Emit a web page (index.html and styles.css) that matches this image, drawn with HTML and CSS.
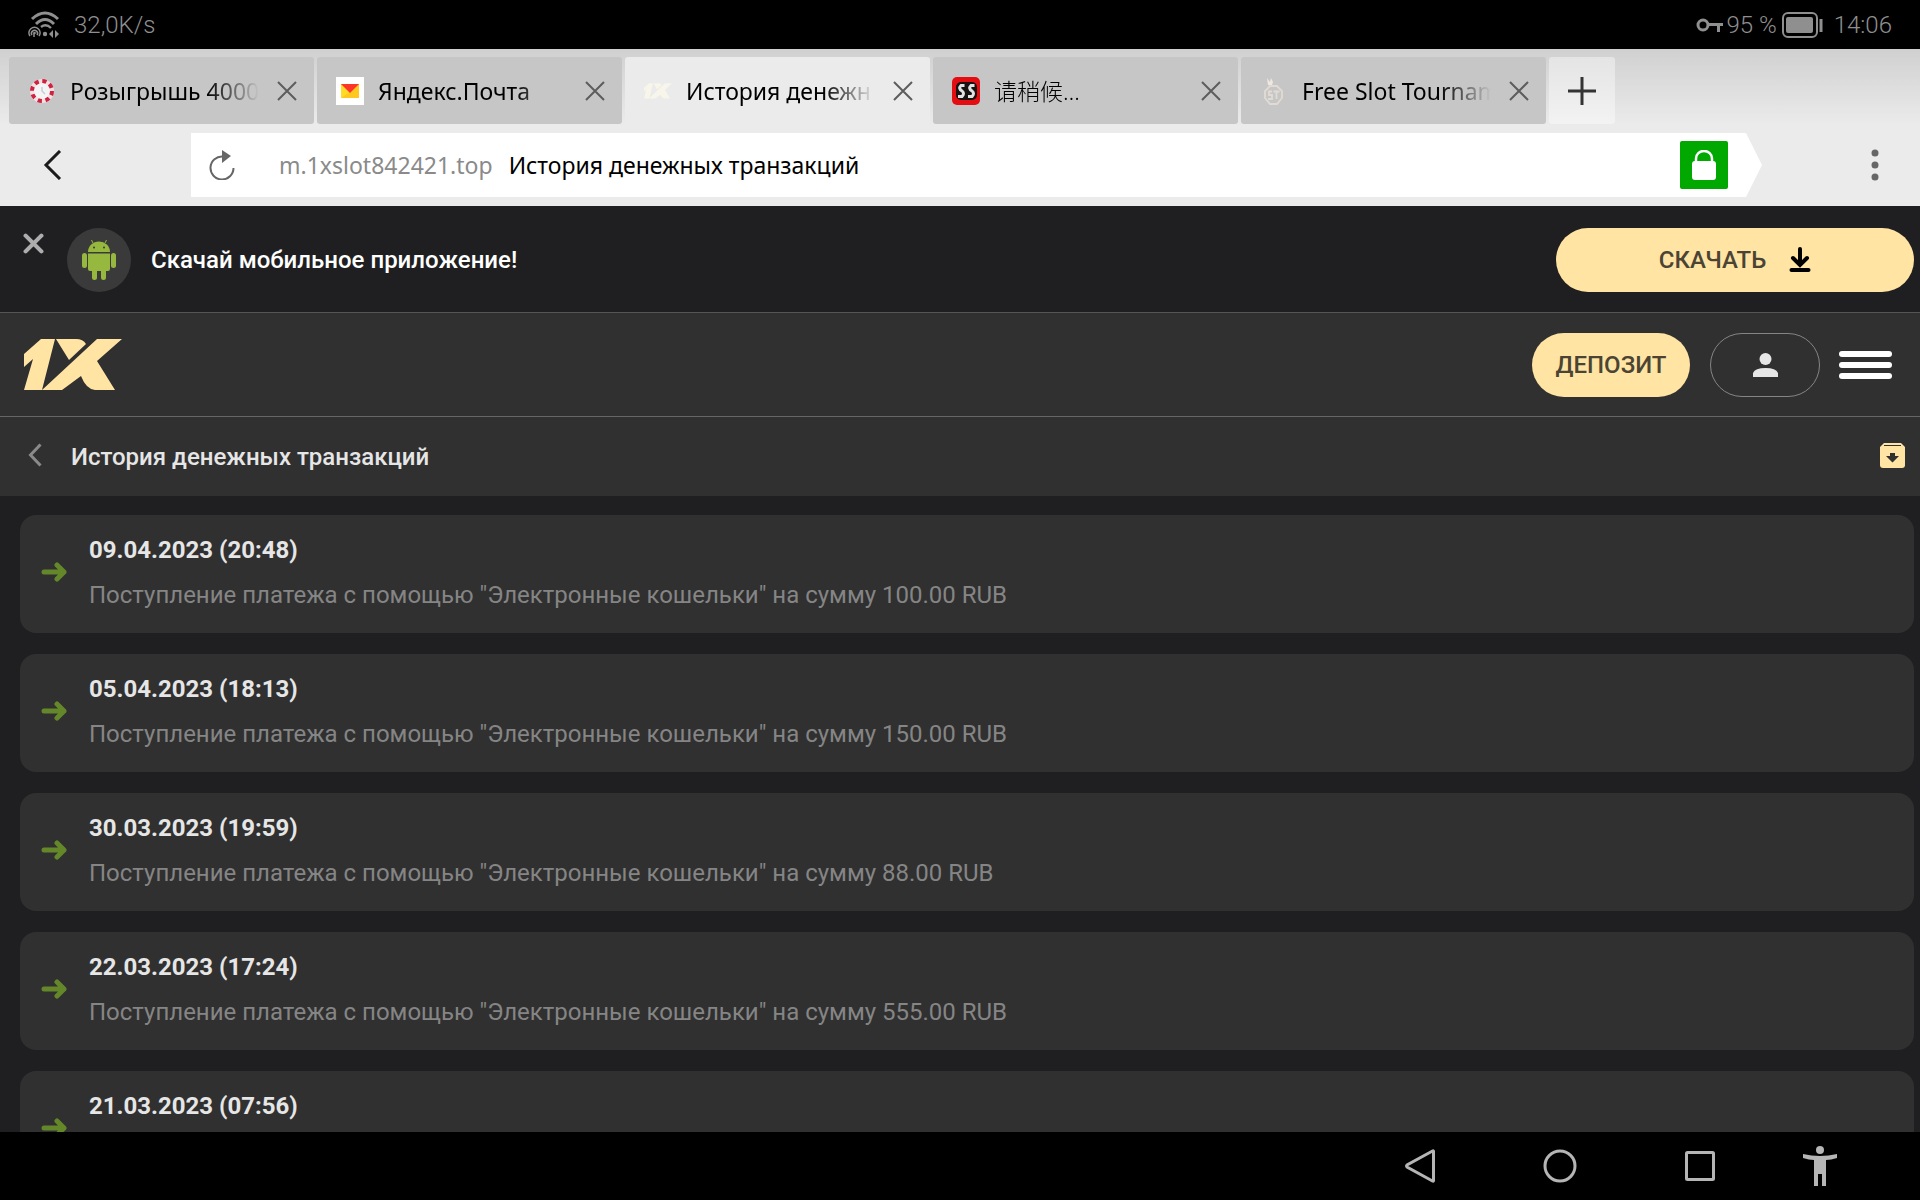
FILE: index.html
```html
<!DOCTYPE html>
<html lang="ru">
<head>
<meta charset="utf-8">
<title>История денежных транзакций</title>
<link rel="stylesheet" href="styles.css">
</head>
<body>
<div class="device">
  <div class="status-bar">
    <div class="status-group status-left">
      <svg class="icon-wifi" viewBox="0 0 32 28" fill="none" stroke="#8f8f8f" stroke-width="3" aria-hidden="true">
        <path d="M4 8Q17-4 30 8M8 13Q17 4 26 13" /><path d="M13 16Q18 12 23 17" stroke-width="2.4"/>
        <g stroke-width="1.6"><path d="M2 25a5.5 5.5 0 1 1 9 0M4 24a3 3 0 1 1 5 0"/></g>
        <circle cx="6.500" cy="22" r="1.300" fill="#8f8f8f" stroke="none"/><path d="M6 22v4" stroke-width="1.500"/>
        <circle cx="17" cy="23" r="2.200" fill="#8f8f8f" stroke="none"/>
        <path d="M21 23l4-4v8zM27 19v8l4-4z" fill="#8f8f8f" stroke="none"/>
      </svg>
      <span>32,0K/s</span>
    </div>
    <div class="status-group">
      <svg class="icon-key" viewBox="0 0 28 18" fill="none" stroke="#8f8f8f" stroke-width="3" aria-hidden="true"><circle cx="7" cy="9" r="5"/><path d="M12 8.500h15M22.500 9v7"/></svg>
      <span>95 %</span>
      <svg class="icon-battery" viewBox="0 0 42 28" aria-hidden="true"><rect x="1" y="2" width="34" height="24" rx="5" fill="none" stroke="#8f8f8f" stroke-width="2"/><rect x="4" y="6" width="27" height="16" rx="2" fill="#8f8f8f"/><path d="M39 8v13" stroke="#8f8f8f" stroke-width="3"/></svg>
      <span class="clock">14:06</span>
    </div>
  </div>

  <div class="browser">
    <div class="tabs">
      <div class="tab">
        <svg class="favicon" viewBox="0 0 28 28" aria-hidden="true"><circle cx="14" cy="14" r="8.500" fill="#f4f4f4"/><circle cx="14" cy="14" r="10" fill="none" stroke="#f3dfe2" stroke-width="4"/><circle cx="14" cy="14" r="10" fill="none" stroke="#cf2140" stroke-width="4" stroke-dasharray="4.200 3.654"/><path d="M14 10v4l3 3" fill="none" stroke="#c3ced3" stroke-width="1.500"/></svg>
        <span class="tab-title">Розыгрышь 4000</span>
        <button class="tab-close" aria-label="Закрыть вкладку"><svg viewBox="0 0 20 20"><path d="M1 1l18 18M19 1L1 19"/></svg></button>
      </div>
      <div class="tab">
        <svg class="favicon" viewBox="0 0 28 28" aria-hidden="true"><path fill="#fff" d="M0 0h28v28H0z"/><path fill="#ffc81f" d="M5 7h18v14H5z"/><path fill="#ffdb25" d="M5 7l9 8-9 6z"/><path fill="#fb3528" d="M5 7h18l-9 9z"/></svg>
        <span class="tab-title">Яндекс.Почта</span>
        <button class="tab-close" aria-label="Закрыть вкладку"><svg viewBox="0 0 20 20"><path d="M1 1l18 18M19 1L1 19"/></svg></button>
      </div>
      <div class="tab tab-active">
        <svg class="favicon" viewBox="0 -22 100 100" fill="#f8f5ea" aria-hidden="true"><path d="M0 16L18 0h14L19 55H0L8 22 0 30zM34 0h20q7 1 10 6L47 23zM75 0h25L75 24l18 31H71q-8-2-12-14L40 55H18z"/></svg>
        <span class="tab-title">История денежн</span>
        <button class="tab-close" aria-label="Закрыть вкладку"><svg viewBox="0 0 20 20"><path d="M1 1l18 18M19 1L1 19"/></svg></button>
      </div>
      <div class="tab">
        <svg class="favicon" viewBox="0 0 28 28" aria-hidden="true"><rect width="28" height="28" rx="5" fill="#e30d12"/><rect x="4" y="5" width="21" height="18" rx="5" fill="#171313"/><path d="M12.500 8.500H9q-3 3 1 5.500 3 2 0 5.500H6M22.500 8.500H19q-3 3 1 5.500 3 2 0 5.500h-4" fill="none" stroke="#e2e2e2" stroke-width="3"/></svg>
        <span class="tab-title tab-title-light">请稍候…</span>
        <button class="tab-close" aria-label="Закрыть вкладку"><svg viewBox="0 0 20 20"><path d="M1 1l18 18M19 1L1 19"/></svg></button>
      </div>
      <div class="tab">
        <svg class="favicon" viewBox="0 0 28 28" fill="none" stroke="#e2dbd5" stroke-width="1.800" aria-hidden="true"><path d="M10 9h7l5 5v7l-5 6h-7l-5-6v-7z"/><path d="M12 14.500H9V18h3v4H8M13.500 14.500h6M16.500 14.500V22"/><path d="M7 1l3 4 1-4 2 4-1 3H8z" fill="#f0e7df" stroke="none"/></svg>
        <span class="tab-title">Free Slot Tournam</span>
        <button class="tab-close" aria-label="Закрыть вкладку"><svg viewBox="0 0 20 20"><path d="M1 1l18 18M19 1L1 19"/></svg></button>
      </div>
      <button class="tab-new" aria-label="Новая вкладка"><svg viewBox="0 0 28 28"><path d="M14 0v28M0 14h28"/></svg></button>
    </div>
    <div class="toolbar">
      <button class="nav-back" aria-label="Назад"><svg viewBox="0 0 20 30"><path d="M17 1L3 15l14 14"/></svg></button>
      <div class="address">
        <button class="reload" aria-label="Обновить"><svg viewBox="0 0 26 30"><path d="M24.500 18A11.500 11.500 0 1 1 14 6.500" fill="none" stroke="#666" stroke-width="2"/><path d="M13 0l9 6-9 7z" fill="#666"/></svg></button>
        <span class="host">m.1xslot842421.top</span>
        <span class="page-name">История денежных транзакций</span>
        <button class="secure" aria-label="Защищённое соединение"><svg viewBox="0 0 24 30"><path d="M4 12V8.500a8 7.500 0 0 1 16 0V12" fill="none" stroke="#fff" stroke-width="2.500"/><rect y="11" width="24" height="19" rx="3" fill="#fff"/></svg></button>
      </div>
      <button class="menu-dots" aria-label="Меню"><svg viewBox="0 0 8 32" fill="#666"><circle cx="4" cy="4" r="3.500"/><circle cx="4" cy="16" r="3.500"/><circle cx="4" cy="28" r="3.500"/></svg></button>
    </div>
  </div>

  <main class="site">
    <section class="promo">
      <button class="promo-close" aria-label="Закрыть"><svg viewBox="0 0 20 20"><path d="M2.500 2.500l15 15M17.500 2.500l-15 15"/></svg></button>
      <span class="promo-badge"><svg viewBox="0 0 34 40" fill="#97b83e" aria-hidden="true"><path d="M6 12a11 10.500 0 0 1 22 0z"/><path d="M11 3L9.500 0M23 3l1.500-3" stroke="#97b83e" stroke-width="1"/><path d="M6 13.500h22V29q0 2-2 2h-2v6.500a2.200 2.200 0 0 1-5 0V31h-4v6.500a2.200 2.200 0 0 1-5 0V31H8q-2 0-2-2z"/><rect y="13" width="5" height="15" rx="2.500"/><rect x="29" y="13" width="5" height="15" rx="2.500"/><circle cx="12" cy="7.500" r="1" fill="#3a3a3a"/><circle cx="22" cy="7.500" r="1" fill="#3a3a3a"/></svg></span>
      <p class="promo-text">Скачай мобильное приложение!</p>
      <button class="pill download">СКАЧАТЬ
        <svg viewBox="0 0 21 25" fill="none" stroke="#000" aria-hidden="true"><path d="M10.500 2v15M3.500 11l7 7 7-7" stroke-width="4" stroke-linecap="round"/><path d="M2 23h17" stroke-width="4" stroke-linecap="round"/></svg>
      </button>
    </section>

    <header class="header">
      <a class="logo" href="#" aria-label="1X"><svg viewBox="0 0 98 51" fill="#ffe4a3"><path d="M0 15L17 0h14L18 51H0L9 20 0 28zM32 0h20q7 0 10 5L45 21zM73 0h25L73 22l18 29H71q-9-1-14-14L38 51H18z"/></svg></a>
      <button class="pill deposit">ДЕПОЗИТ</button>
      <button class="profile" aria-label="Профиль"><svg viewBox="0 0 25 24" fill="#e6e6e6"><circle cx="12.500" cy="6" r="6"/><path d="M0 24v-4q2-5 12.500-5T25 20v4z"/></svg></button>
      <button class="burger" aria-label="Открыть меню"><span></span><span></span><span></span></button>
    </header>

    <div class="title-bar">
      <button class="title-icon title-back" aria-label="Назад"><svg viewBox="0 0 14 24"><path d="M12.500 1.500L2.500 12l10 10.500"/></svg></button>
      <h1>История денежных транзакций</h1>
      <button class="title-icon archive" aria-label="Архив"><svg viewBox="0 0 25 25"><path d="M4 0h17l4 4v18q0 3-3 3H3q-3 0-3-3V4z" fill="#ffe4a3"/><path d="M4 2.500h17" stroke="#303030"/><path d="M10 10h5v3h4l-6.500 6.500L6 13h4z" fill="#303030"/></svg></button>
    </div>

    <ul class="history">
      <li class="entry">
        <svg class="arrow" viewBox="0 0 26 20" aria-hidden="true"><path d="M3 10h20M16 3l7 7-7 7"/></svg>
        <div><h2>09.04.2023 (20:48)</h2><p>Поступление платежа с помощью "Электронные кошельки" на сумму 100.00 RUB</p></div>
      </li>
      <li class="entry">
        <svg class="arrow" viewBox="0 0 26 20" aria-hidden="true"><path d="M3 10h20M16 3l7 7-7 7"/></svg>
        <div><h2>05.04.2023 (18:13)</h2><p>Поступление платежа с помощью "Электронные кошельки" на сумму 150.00 RUB</p></div>
      </li>
      <li class="entry">
        <svg class="arrow" viewBox="0 0 26 20" aria-hidden="true"><path d="M3 10h20M16 3l7 7-7 7"/></svg>
        <div><h2>30.03.2023 (19:59)</h2><p>Поступление платежа с помощью "Электронные кошельки" на сумму 88.00 RUB</p></div>
      </li>
      <li class="entry">
        <svg class="arrow" viewBox="0 0 26 20" aria-hidden="true"><path d="M3 10h20M16 3l7 7-7 7"/></svg>
        <div><h2>22.03.2023 (17:24)</h2><p>Поступление платежа с помощью "Электронные кошельки" на сумму 555.00 RUB</p></div>
      </li>
      <li class="entry">
        <svg class="arrow" viewBox="0 0 26 20" aria-hidden="true"><path d="M3 10h20M16 3l7 7-7 7"/></svg>
        <div><h2>21.03.2023 (07:56)</h2></div>
      </li>
    </ul>
  </main>

  <nav class="system-nav" aria-label="Системная навигация">
    <button aria-label="Назад"><svg viewBox="0 0 36 36"><path d="M31.500 3.500v29q0 1-1 .5L5 19q-1-1 0-2L30.500 3q1-.5 1 .5z"/></svg></button>
    <button aria-label="Домой"><svg viewBox="0 0 36 36"><circle cx="18" cy="18" r="15"/></svg></button>
    <button aria-label="Недавние"><svg viewBox="0 0 36 36"><rect x="4.500" y="4.500" width="27" height="27" rx="1"/></svg></button>
    <button class="a11y" aria-label="Специальные возможности"><svg viewBox="0 0 36 40"><circle cx="18" cy="4" r="4"/><path d="M1 8q17 4 34 0v4q-6 2-11 2v26h-4V28h-4v12h-4V14q-5 0-11-2z"/></svg></button>
  </nav>
</div>
</body>
</html>
```
FILE: styles.css
```css
* { box-sizing: border-box; }
html, body { height: 100%; }
body {
  margin: 0;
  background: #000;
  font-family: Roboto, "Noto Sans CJK SC", sans-serif;
  font-size: 24px;
  line-height: 32px;
}
h1, h2, p, ul { margin: 0; padding: 0; font-size: inherit; }
button { margin: 0; padding: 0; border: 0; background: none; font: inherit; color: inherit; display: flex; align-items: center; justify-content: center; }
svg { display: block; flex: none; }

.device { height: 100vh; display: flex; flex-direction: column; overflow: hidden; }

.status-bar { flex: none; height: 49px; padding: 0 28px; display: flex; align-items: center; justify-content: space-between; color: #8f8f8f; font-weight: 300; }
.status-group { display: flex; align-items: center; }
.status-left { gap: 14px; }
.icon-wifi { width: 32px; height: 28px; }
.icon-key { width: 28px; height: 18px; margin-right: 2px; }
.icon-battery { width: 42px; height: 28px; margin-left: 5px; }
.clock { margin-left: 10px; }

.browser { flex: none; background: linear-gradient(#d0d0d0, #ebebeb 76px); font-family: "Noto Sans", "Noto Sans CJK SC", sans-serif; font-size: 23px; color: #000; }
.tabs { display: flex; gap: 3px; padding: 8px 9px 0; height: 75px; }
.tab { flex: 0 1 305px; min-width: 0; display: flex; align-items: center; padding: 0 17px 0 19px; background: #c6c6c6; border-radius: 3px; }
.tab-active { background: #ebebeb; }
.favicon { width: 28px; height: 28px; }
.tab-title { flex: 1; min-width: 0; margin: 0 18px 0 14px; overflow: hidden; white-space: nowrap; mask-image: linear-gradient(to right, #000 calc(100% - 52px), transparent); }
.tab-title-light { font-weight: 300; }
.tab-close svg { width: 20px; height: 20px; fill: none; stroke: #5d5d5d; stroke-width: 2; }
.tab-new { width: 66px; background: #ffffff66; border-radius: 3px; }
.tab-new svg { width: 28px; height: 28px; stroke: #333; stroke-width: 3; }

.toolbar { display: flex; align-items: center; height: 82px; }
.nav-back { width: 191px; height: 64px; justify-content: flex-start; padding-left: 43px; }
.nav-back svg { width: 20px; height: 30px; fill: none; stroke: #1c1c1c; stroke-width: 3; }
.address { flex: 1; min-width: 0; height: 64px; display: flex; align-items: center; padding: 0 34px 0 18px; background: #fff; clip-path: polygon(0 0, calc(100% - 16px) 0, 100% 50%, calc(100% - 16px) 100%, 0 100%); }
.reload svg { width: 26px; height: 30px; }
.host { margin-left: 44px; color: #8a8a8a; }
.page-name { flex: 1; margin-left: 16px; white-space: nowrap; }
.secure { width: 48px; height: 48px; background: #00a800; border-radius: 2px; }
.secure svg { width: 24px; height: 30px; }
.menu-dots { width: 158px; height: 64px; padding-left: 68px; }
.menu-dots svg { width: 8px; height: 32px; }

.site { flex: 1; min-height: 0; overflow: hidden; background: #1f1f21; color: #e6e6e6; }
.pill { height: 64px; border-radius: 32px; background: #ffe4a3; color: #4b4434; font-weight: 500; }

.promo { display: flex; align-items: center; height: 107px; padding: 1px 6px 0 23px; border-bottom: 1px solid #555; }
.promo-close { align-self: flex-start; margin-top: 26px; }
.promo-close svg { width: 21px; height: 21px; stroke: #adadad; stroke-width: 4; stroke-linecap: round; }
.promo-badge { display: grid; place-items: center; width: 64px; height: 64px; margin-left: 23px; border-radius: 50%; background: #3a3a3a; }
.promo-badge svg { width: 34px; height: 40px; }
.promo-text { flex: 1; margin-left: 20px; color: #fff; font-weight: 500; }
.download { width: 358px; gap: 23px; }
.download svg { width: 22px; height: 25px; }

.header { display: flex; align-items: center; height: 104px; padding: 0 28px 0 24px; background: #303030; border-bottom: 1px solid #666; }
.logo { margin-right: auto; }
.logo svg { width: 98px; height: 51px; }
.deposit { width: 158px; }
.profile { width: 110px; height: 64px; margin: 0 19px 0 20px; border: 1px solid #858585; border-radius: 32px; }
.profile svg { width: 25px; height: 24px; }
.burger { width: 53px; flex-direction: column; gap: 5px; }
.burger span { width: 100%; height: 6px; border-radius: 3px; background: #fff; }

.title-bar { display: flex; align-items: center; height: 79px; padding: 0 15px 0 28px; background: #303030; }
.title-icon { padding-bottom: 3px; }
.title-back svg { width: 14px; height: 24px; fill: none; stroke: #8a8a8a; stroke-width: 3; }
h1 { flex: 1; margin-left: 29px; font-weight: 500; }
.archive svg { width: 25px; height: 25px; }

.history { list-style: none; display: flex; flex-direction: column; gap: 21px; padding: 19px 6px 20px 20px; }
.entry { display: flex; align-items: flex-start; min-height: 118px; padding: 19px 21px; border-radius: 16px; background: #303030; }
.entry h2 { font-weight: 700; }
.entry p { margin-top: 13px; color: #858585; }
.arrow { width: 26px; height: 20px; margin: 28px 22px 0 0; fill: none; stroke: #64872a; stroke-width: 5; stroke-linecap: round; stroke-linejoin: round; }

.system-nav { flex: none; display: flex; align-items: center; justify-content: flex-end; height: 68px; padding-right: 82px; gap: 104px; }
.system-nav svg { width: 36px; height: 36px; fill: none; stroke: #b5b5b5; stroke-width: 3; }
.system-nav .a11y { margin-left: -20px; }
.system-nav .a11y svg { height: 40px; fill: #b5b5b5; stroke: none; }
```
